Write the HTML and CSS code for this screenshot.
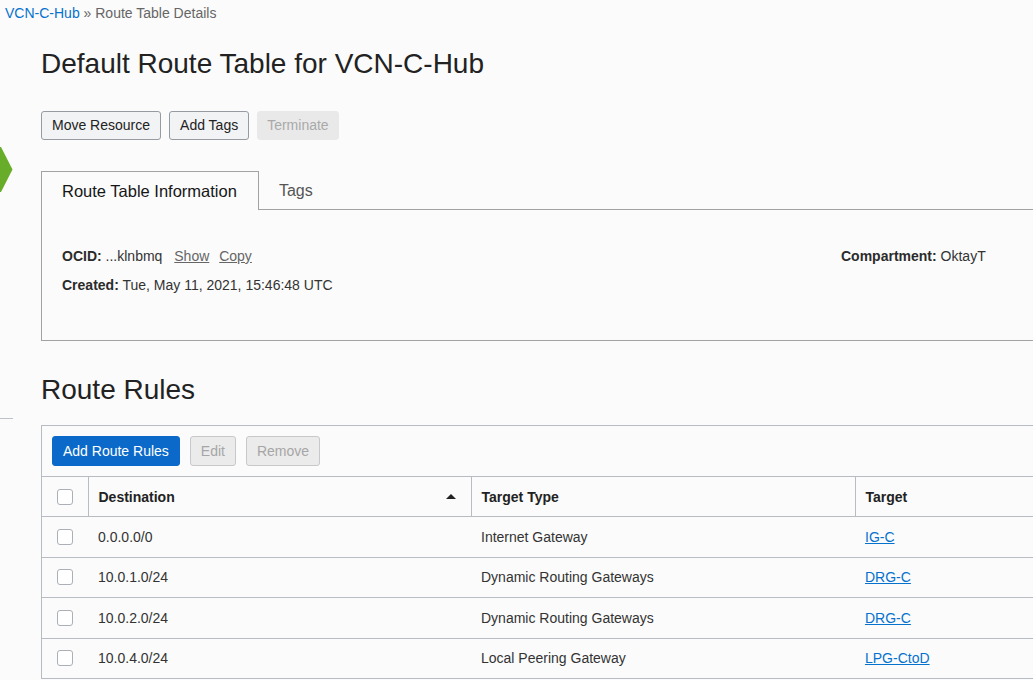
FILE: index.html
```html
<!DOCTYPE html>
<html lang="en">
<head>
<meta charset="utf-8">
<title>Route Table Details</title>
<link rel="stylesheet" href="styles.css">
</head>
<body>
<nav class="breadcrumb"><a href="#" class="crumb-link">VCN-C-Hub</a> » Route Table Details</nav>
<div class="layout">
  <aside class="rail">
    <svg class="rail-mark" width="13" height="45" viewBox="0 0 13 45"><polygon points="0,0 1,0 12.5,22.5 1,45 0,45" fill="#68ad2a"/></svg>
    <div class="rail-line"></div>
  </aside>
  <main class="main">
    <h1 class="page-title">Default Route Table for VCN-C-Hub</h1>
    <div class="actions">
      <button class="btn">Move Resource</button>
      <button class="btn">Add Tags</button>
      <button class="btn btn-disabled">Terminate</button>
    </div>

    <div class="tabs">
      <div class="tab tab-active">Route Table Information</div>
      <div class="tab">Tags</div>
      <div class="tab-fill"></div>
    </div>
    <section class="panel">
      <div class="info-grid">
        <div class="info-row"><b>OCID:</b> ...klnbmq <a href="#" class="sub-link sub-first">Show</a> <a href="#" class="sub-link">Copy</a></div>
        <div class="info-row"><b>Compartment:</b> OktayT</div>
        <div class="info-row"><b>Created:</b> Tue, May 11, 2021, 15:46:48 UTC</div>
      </div>
    </section>

    <h2 class="section-title">Route Rules</h2>
    <div class="table-box">
      <div class="toolbar">
        <button class="tbtn tbtn-primary">Add Route Rules</button>
        <button class="tbtn tbtn-disabled">Edit</button>
        <button class="tbtn tbtn-disabled">Remove</button>
      </div>
      <table class="rules">
        <colgroup>
          <col class="c-check"><col class="c-dest"><col class="c-type"><col class="c-target">
        </colgroup>
        <thead>
          <tr>
            <th class="cell-check"><span class="checkbox"></span></th>
            <th><div class="th-sort"><span>Destination</span><span class="sort-arrow"></span></div></th>
            <th>Target Type</th>
            <th>Target</th>
          </tr>
        </thead>
        <tbody>
          <tr><td class="cell-check"><span class="checkbox"></span></td><td>0.0.0.0/0</td><td>Internet Gateway</td><td><a href="#" class="link">IG-C</a></td></tr>
          <tr><td class="cell-check"><span class="checkbox"></span></td><td>10.0.1.0/24</td><td>Dynamic Routing Gateways</td><td><a href="#" class="link">DRG-C</a></td></tr>
          <tr><td class="cell-check"><span class="checkbox"></span></td><td>10.0.2.0/24</td><td>Dynamic Routing Gateways</td><td><a href="#" class="link">DRG-C</a></td></tr>
          <tr><td class="cell-check"><span class="checkbox"></span></td><td>10.0.4.0/24</td><td>Local Peering Gateway</td><td><a href="#" class="link">LPG-CtoD</a></td></tr>
        </tbody>
      </table>
    </div>
  </main>
</div>
</body>
</html>
```
FILE: styles.css
```css
html, body {
  margin: 0;
  padding: 0;
  overflow: hidden;
}
body {
  background: #fbfbfb;
  font-family: "Liberation Sans", Arial, sans-serif;
  font-size: 14px;
  color: #333;
  width: 1033px;
  height: 680px;
}
.breadcrumb {
  padding: 5px 0 0 5px;
  line-height: 16px;
  height: 16px;
  color: #666;
  white-space: nowrap;
}
.crumb-link {
  color: #0572ce;
  text-decoration: none;
}
.layout {
  display: flex;
  align-items: flex-start;
}
.rail {
  width: 13px;
  flex: none;
  display: flex;
  flex-direction: column;
}
.rail-mark {
  display: block;
  margin-top: 126px;
}
.rail-line {
  margin-top: 226px;
  height: 1px;
  background: #bcc2c8;
}
.main {
  margin-left: 28px;
  width: 1240px;
  flex: none;
}
.page-title {
  margin: 26px 0 0;
  font-size: 28px;
  line-height: 34px;
  font-weight: normal;
  color: #222;
  white-space: nowrap;
}
.actions {
  display: flex;
  gap: 8px;
  margin-top: 30px;
}
.btn {
  font-family: inherit;
  font-size: 14px;
  line-height: 17px;
  padding: 5px 10px;
  border: 1px solid #959ba1;
  border-radius: 3px;
  background: #f2f3f4;
  color: #222;
}
.btn-disabled {
  border-color: #e9e9e9;
  background: #e9e9e9;
  color: #a9a9a9;
  padding: 5px 9px;
}
.tabs {
  display: flex;
  margin-top: 31px;
  height: 39px;
}
.tab {
  padding: 0 20px;
  line-height: 40px;
  font-size: 16px;
  color: #555;
  border-bottom: 1px solid #a2a2a2;
  white-space: nowrap;
}
.tab-active {
  font-size: 16.5px;
  color: #161616;
  border: 1px solid #a2a2a2;
  border-bottom: none;
  line-height: 38px;
  padding: 0 21px 0 20px;
}
.tab-fill {
  flex: 1;
  border-bottom: 1px solid #a2a2a2;
}
.panel {
  border: 1px solid #a2a2a2;
  border-top: none;
  height: 131px;
  box-sizing: border-box;
  padding: 32px 20px 0;
}
.info-grid {
  display: grid;
  grid-template-columns: 779px 1fr;
}
.info-row {
  line-height: 29px;
  color: #333;
  white-space: nowrap;
}
.info-row b {
  color: #2b2b2b;
}
.sub-link {
  color: #666;
  text-decoration: underline;
  margin-left: 6px;
}
.sub-first {
  margin-left: 8px;
}
.section-title {
  margin: 32px 0 0;
  font-size: 28px;
  line-height: 34px;
  font-weight: normal;
  color: #222;
}
.table-box {
  margin-top: 18px;
  border: 1px solid #b6bcc2;
  border-bottom: none;
}
.toolbar {
  display: flex;
  gap: 10px;
  padding: 10px;
}
.tbtn {
  font-family: inherit;
  font-size: 14px;
  line-height: 16px;
  padding: 6px 10px;
  border: 1px solid #c6c8ca;
  border-radius: 3px;
  background: #ebebeb;
  color: #a6a6a6;
}
.tbtn-primary {
  background: #0b6ac9;
  border-color: #0b6ac9;
  color: #fff;
}
.rules {
  width: 100%;
  border-collapse: collapse;
  table-layout: fixed;
}
.c-check { width: 46px; }
.c-dest { width: 383px; }
.c-type { width: 384px; }
.rules th, .rules td {
  height: 39.5px;
  padding: 0 10px;
  text-align: left;
  border-top: 1px solid #b6bcc2;
  white-space: nowrap;
  color: #333;
}
.rules th {
  font-weight: bold;
  color: #222;
  border-left: 1px solid #b6bcc2;
  height: 39px;
}
.rules th:first-child {
  border-left: none;
}
.rules td {
  border-bottom: 1px solid #b6bcc2;
}
.rules .cell-check {
  padding: 0 0 0 15px;
}
.checkbox {
  display: block;
  width: 14px;
  height: 14px;
  border: 1px solid #aab0b5;
  border-radius: 3px;
  background: #fff;
}
.th-sort {
  display: flex;
  align-items: center;
  justify-content: space-between;
  padding-right: 5px;
}
.sort-arrow {
  width: 0;
  height: 0;
  border-left: 5px solid transparent;
  border-right: 5px solid transparent;
  border-bottom: 5px solid #222;
}
.link {
  color: #0572ce;
  text-decoration: underline;
}
```
